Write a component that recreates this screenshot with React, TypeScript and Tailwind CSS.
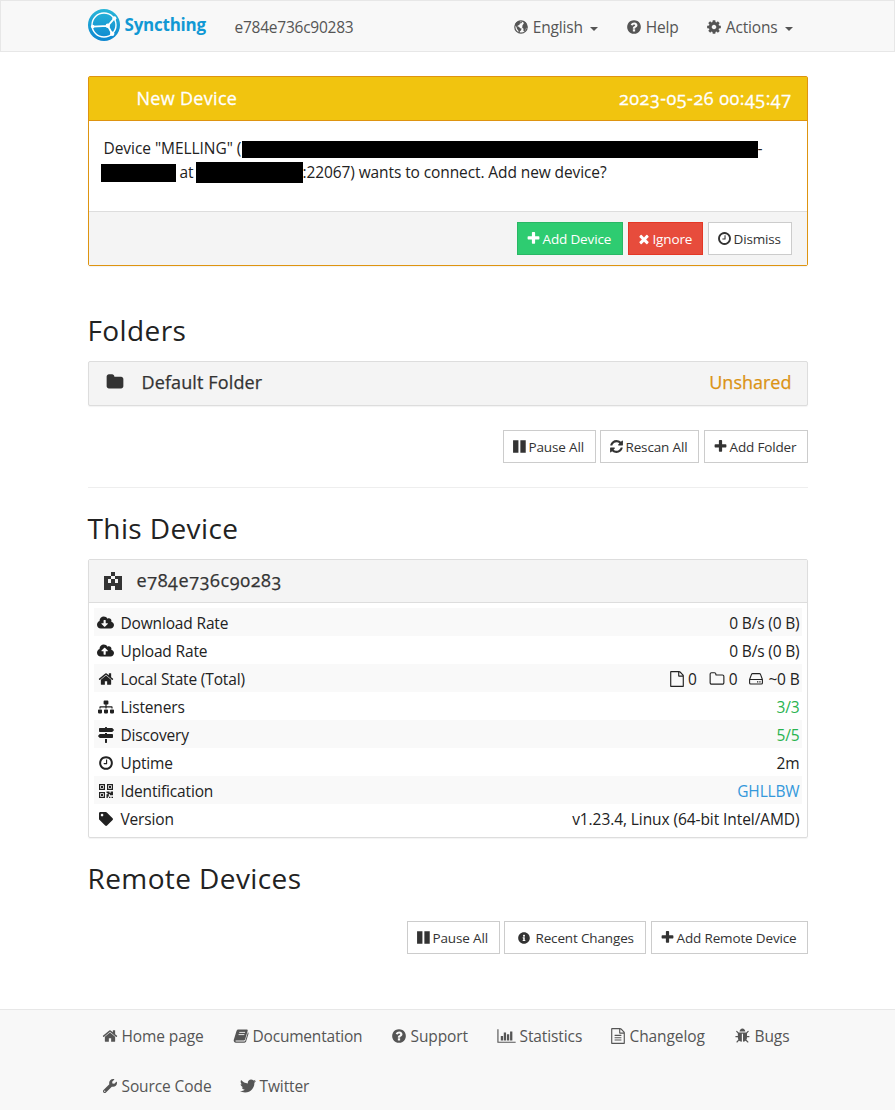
import type { ReactNode } from "react";
import { FaCloudDownloadAlt, FaCloudUploadAlt, FaInfoCircle, FaMapSigns, FaSitemap, FaTag, FaTwitter, FaWrench } from "react-icons/fa";

const paths = {
  home: "M1472 992v480q0 26-19 45t-45 19h-384v-384h-256v384h-384q-26 0-45-19t-19-45v-480q0-1 .5-3t.5-3l575-474 575 474q1 2 1 6zm223-69l-62 74q-8 9-21 11h-3q-13 0-21-7l-692-577-692 577q-12 8-24 7-13-2-21-11l-62-74q-8-10-7-23.5t11-21.5l719-599q32-26 76-26t76 26l244 204v-195q0-14 9-23t23-9h192q14 0 23 9t9 23v408l219 182q10 8 11 21.5t-7 23.5z",
  plus: "M1600 736v192q0 40-28 68t-68 28h-416v416q0 40-28 68t-68 28h-192q-40 0-68-28t-28-68v-416h-416q-40 0-68-28t-28-68v-192q0-40 28-68t68-28h416v-416q0-40 28-68t68-28h192q40 0 68 28t28 68v416h416q40 0 68 28t28 68z",
  times: "M1490 1322q0 40-28 68l-136 136q-28 28-68 28t-68-28l-294-294-294 294q-28 28-68 28t-68-28l-136-136q-28-28-28-68t28-68l294-294-294-294q-28-28-28-68t28-68l136-136q28-28 68-28t68 28l294 294 294-294q28-28 68-28t68 28l136 136q28 28 28 68t-28 68l-294 294 294 294q28 28 28 68z",
  clock: "M1024 544v448q0 14-9 23t-23 9h-320q-14 0-23-9t-9-23v-64q0-14 9-23t23-9h224v-352q0-14 9-23t23-9h64q14 0 23 9t9 23zm416 352q0-148-73-273t-198-198-273-73-273 73-198 198-73 273 73 273 198 198 273 73 273-73 198-198 73-273zm224 0q0 209-103 385.5t-279.5 279.5-385.5 103-385.5-103-279.5-279.5-103-385.5 103-385.5 279.5-279.5 385.5-103 385.5 103 279.5 279.5 103 385.5z",
  question: "M1024 1376v-192q0-14-9-23t-23-9h-192q-14 0-23 9t-9 23v192q0 14 9 23t23 9h192q14 0 23-9t9-23zm256-672q0-88-55.5-163t-138.5-116-170-41q-243 0-371 213-15 24 8 42l132 100q7 6 19 6 16 0 25-12 53-68 86-92 34-24 86-24 48 0 85.5 26t37.5 59q0 38-20 61t-68 45q-63 28-115.5 86.5t-52.5 125.5v36q0 14 9 23t23 9h192q14 0 23-9t9-23q0-19 21.5-49.5t54.5-49.5q32-18 49-28.5t46-35 44.5-48 28-60.5 12.5-81zm384 192q0 209-103 385.5t-279.5 279.5-385.5 103-385.5-103-279.5-279.5-103-385.5 103-385.5 279.5-279.5 385.5-103 385.5 103 279.5 279.5 103 385.5z",
  cog: "M1152 896q0-106-75-181t-181-75-181 75-75 181 75 181 181 75 181-75 75-181zm512-109v222q0 12-8 23t-20 13l-185 28q-19 54-39 91 35 50 107 138 10 12 10 25t-9 23q-27 37-99 108t-94 71q-12 0-26-9l-138-108q-44 23-91 38-16 136-29 186-7 28-36 28h-222q-14 0-24.5-8.5t-11.5-21.5l-28-184q-49-16-90-37l-141 107q-10 9-25 9-14 0-25-11-126-114-165-168-7-10-7-23 0-12 8-23 15-21 51-66.5t54-70.5q-27-50-41-99l-183-27q-13-2-21-12.5t-8-23.5v-222q0-12 8-23t19-13l186-28q14-46 39-92-40-57-107-138-10-12-10-24 0-10 9-23 26-36 98.5-107.5t94.5-71.5q13 0 26 10l138 107q44-23 91-38 16-136 29-186 7-28 36-28h222q14 0 24.5 8.5t11.5 21.5l28 184q49 16 90 37l142-107q9-9 24-9 13 0 25 10 129 119 165 170 7 8 7 22 0 12-8 23-15 21-51 66.5t-54 70.5q26 50 41 98l183 28q13 2 21 12.5t8 23.5z",
  folder: "M1728 608v704q0 92-66 158t-158 66h-1216q-92 0-158-66t-66-158v-960q0-92 66-158t158-66h320q92 0 158 66t66 158v32h672q92 0 158 66t66 158z",
  folderO: "M1600 1312v-704q0-40-28-68t-68-28h-704q-40 0-68-28t-28-68v-64q0-40-28-68t-68-28h-320q-40 0-68 28t-28 68v960q0 40 28 68t68 28h1216q40 0 68-28t28-68zm128-704v704q0 92-66 158t-158 66h-1216q-92 0-158-66t-66-158v-960q0-92 66-158t158-66h320q92 0 158 66t66 158v32h672q92 0 158 66t66 158z",
  refresh: "M1639 1056q0 5-1 7-64 268-268 434.5t-478 166.5q-146 0-282.5-55t-243.5-157l-129 129q-19 19-45 19t-45-19-19-45v-448q0-26 19-45t45-19h448q26 0 45 19t19 45-19 45l-137 137q71 66 161 102t187 36q134 0 250-65t186-179q11-17 53-117 8-23 30-23h192q13 0 22.5 9.5t9.5 22.5zm25-800v448q0 26-19 45t-45 19h-448q-26 0-45-19t-19-45 19-45l138-138q-148-137-349-137-134 0-250 65t-186 179q-11 17-53 117-8 23-30 23h-199q-13 0-22.5-9.5t-9.5-22.5v-7q65-268 270-434.5t480-166.5q146 0 284 55.5t245 156.5l130-129q19-19 45-19t45 19 19 45z",
  pause: "M128 160h640v1472h-640zM1000 160h640v1472h-640z",
  fileO: "M1596 380q28 28 48 76t20 88v1152q0 40-28 68t-68 28h-1344q-40 0-68-28t-28-68v-1600q0-40 28-68t68-28h896q40 0 88 20t76 48zm-444-244v376h376q-10-29-22-41l-313-313q-12-12-41-22zm384 1528v-1024h-416q-40 0-68-28t-28-68v-416h-768v1536h1280z",
  fileText: "M1596 380q28 28 48 76t20 88v1152q0 40-28 68t-68 28h-1344q-40 0-68-28t-28-68v-1600q0-40 28-68t68-28h896q40 0 88 20t76 48zm-444-244v376h376q-10-29-22-41l-313-313q-12-12-41-22zm384 1528v-1024h-416q-40 0-68-28t-28-68v-416h-768v1536h1280zm-1024-864q0-14 9-23t23-9h704q14 0 23 9t9 23v64q0 14-9 23t-23 9h-704q-14 0-23-9t-9-23v-64zm736 224q14 0 23 9t9 23v64q0 14-9 23t-23 9h-704q-14 0-23-9t-9-23v-64q0-14 9-23t23-9h704zm0 256q14 0 23 9t9 23v64q0 14-9 23t-23 9h-704q-14 0-23-9t-9-23v-64q0-14 9-23t23-9h704z",
  bug: "M1632 960q0 26-19 45t-45 19h-224q0 171-67 290l208 209q19 19 19 45t-19 45q-18 19-45 19t-45-19l-198-197q-5 5-15 13t-42 28.5-65 36.5-82 29-97 13v-896h-128v896q-51 0-101.5-13.5t-87-33-66-39-43.5-32.5l-15-14-183 207q-20 21-48 21-24 0-43-16-19-18-20.5-44.5t15.5-46.5l202-227q-58-114-58-274h-224q-26 0-45-19t-19-45 19-45 45-19h224v-294l-173-173q-19-19-19-45t19-45 45-19 45 19l173 173h844l173-173q19-19 45-19t45 19 19 45-19 45l-173 173v294h224q26 0 45 19t19 45zm-480-576h-640q0-133 93.5-226.5t226.5-93.5 226.5 93.5 93.5 226.5z",
};

function Glyph({ name, className }: { name: keyof typeof paths; className: string }) {
  return <svg viewBox="0 0 1792 1792" fill="currentColor" className={`shrink-0 ${className}`}><path d={paths[name]} /></svg>;
}

function Globe() {
  return (
    <svg viewBox="0 0 16 16" className="size-4 shrink-0">
      <circle cx="8" cy="8" r="6.2" fill="none" stroke="currentColor" strokeWidth="1.2" />
      <path fill="currentColor" d="M1.8 6.4C2.3 4 4.300 2 7 1.700L6.500 3l1.300.2.5-.7 1 .6-1.100 1.200-1.300.3-.6 1.400-1.500.4-.3 1.200 1.500.2 1.100 1.400 1.500.4-.5 1.600-1.300 1.300-.1 1.700-1-.4-.5-2.600L4 10.100 3.600 8.300 2.800 7.100zM9.500 6.300l1.300-1.700-.5-1.200 1-1 1.700 1.600 1.100 2.400.1 2.500-1.100-.1-.5 1.900-1.100 1.700-1.100-.7.1-2-1.300-.9z" />
    </svg>
  );
}

function Book() {
  return (
    <svg viewBox="0 0 16 16" className="size-4 shrink-0">
      <path fill="currentColor" d="M5.300 1.400h8.400c.8 0 1.200.6 1 1.300l-2.600 8.800c-.2.7-.7 1-1.400 1H2.900c-.6 0-.8.9.2.9h8.100c.6 0 1-.2 1.200-.8l2.500-8.300c.6.3.8.8.6 1.400l-2.400 7.900c-.2.700-.9 1.100-1.600 1.100H3c-1.700 0-2.700-1.500-2.200-2.900l2.700-8.800c.3-1 .9-1.600 1.800-1.600z" />
      <path stroke="#f8f8f8" strokeWidth=".9" d="M6.300 4.400h5.800M5.600 6.600h5.800" />
    </svg>
  );
}

function BarChart() {
  return (
    <svg viewBox="0 0 2048 1792" fill="currentColor" className="h-4 w-[19px] shrink-0">
      <path d="M2048 1536v128h-2048v-1536h128v1408zM384 896h256v512h-256zM720 512h256v896h-256zM1072 704h256v704h-256zM1424 384h256v1024h-256z" />
    </svg>
  );
}

function Hdd() {
  return (
    <svg viewBox="0 0 14 14" fill="none" stroke="currentColor" className="mr-[5px] ml-3 size-[14px] shrink-0">
      <path strokeWidth="1.100" strokeLinejoin="round" d="M.6 7.500L2.500 2.400q.3-.8 1.100-.8h6.800q.8 0 1.100.8L13.400 7.500V11q0 1-1 1H1.600q-1 0-1-1zM.6 7.500h12.800" />
      <path strokeWidth="1.300" d="M8 9.800h1.300M10.300 9.800h1.300" />
    </svg>
  );
}

function QrCode() {
  return (
    <svg viewBox="0 0 14 14" className="size-[14px] shrink-0">
      <path fill="none" stroke="currentColor" strokeWidth="1.200" d="M.6.6h4.800v4.800H.6zM8.600.6h4.800v4.800H8.600zM.6 8.600h4.800v4.800H.6z" />
      <path fill="currentColor" d="M2 2h2v2H2zM10 2h2v2h-2zM2 10h2v2H2zM7.500 7.500h3v1.200h1.200V7.500H14v3.800h-3.200v-1.300h-1v2.400h-1V14H7.500v-3.800h1.100V9H7.500zM10 12.800h1.400V14H10zM12.500 12.800H14V14h-1.500z" />
    </svg>
  );
}

function Logo() {
  return (
    <svg viewBox="0 0 32 32" className="size-8 shrink-0">
      <defs>
        <linearGradient id="logo" x1="0" y1="0" x2="0" y2="1">
          <stop offset="0" stopColor="#29b6d8" />
          <stop offset="1" stopColor="#0c86d0" />
        </linearGradient>
      </defs>
      <circle cx="16" cy="16" r="16" fill="url(#logo)" />
      <g fill="none" stroke="#fff" strokeWidth="1.400">
        <circle cx="16" cy="16" r="12" />
        <path strokeWidth="1.800" d="M19.800 16.800L26.300 9.300M19.800 16.800L4.600 17.600M19.800 16.800L24.300 25" />
      </g>
      <g fill="#fff">
        <circle cx="26.400" cy="9.300" r="2" />
        <circle cx="4.700" cy="17.600" r="1.800" />
        <circle cx="19.800" cy="16.800" r="2.200" />
        <circle cx="24.200" cy="24.800" r="2.200" />
      </g>
    </svg>
  );
}

function Identicon() {
  return (
    <svg viewBox="0 0 5 5" fill="#333" shapeRendering="crispEdges" className="size-[18px] shrink-0">
      <path d="M2 0h1v1h-1zM0 1h2v1h-2zM3 1h2v1h-2zM0 2h1v1h-1zM2 2h1v1h-1zM4 2h1v1h-1zM0 3h5v1h-5zM0 4h2v1h-2zM3 4h2v1h-2z" />
    </svg>
  );
}

function Caret() {
  return <span className="ml-[3px] mt-[3px] border-x-4 border-t-4 border-x-transparent border-t-[#555]" />;
}

function Button({ width, tone = "border-[#ccc] bg-white text-[#333]", icon, children, gap = "gap-[2px]" }: { width: string; tone?: string; icon: ReactNode; children: ReactNode; gap?: string }) {
  return (
    <button className={`flex h-[33px] items-center border pl-2 text-[13.5px] tracking-[-0.15px] whitespace-nowrap ${gap} ${width} ${tone}`}>
      {icon}
      <span>{children}</span>
    </button>
  );
}

function Row({ icon, label, striped, children }: { icon: ReactNode; label: string; striped?: boolean; children: ReactNode }) {
  return (
    <div className={`flex h-7 items-center pt-px pr-[2px] pl-[3px] ${striped ? "bg-[#f9f9f9]" : ""}`}>
      <span className="flex w-[18px] justify-center">{icon}</span>
      <span className="ml-[6px]">{label}</span>
      <span className="ml-auto flex items-center">{children}</span>
    </div>
  );
}

function FooterLink({ width, icon, children, gap = "gap-1" }: { width: string; icon: ReactNode; children: ReactNode; gap?: string }) {
  return <a className={`flex h-[50px] items-center whitespace-nowrap ${gap} ${width}`}>{icon}<span>{children}</span></a>;
}

const heading = "text-[28px] leading-[30px] tracking-[0.4px] text-[#222]";

export default function App() {
  return (
    <div className="flex h-[1110px] flex-col overflow-hidden bg-white font-['Open_Sans',sans-serif] text-[15.5px] leading-6 tracking-[-0.16px] text-[#222]">
      <nav className="h-[52px] shrink-0 border border-[#e7e7e7] bg-[#f8f8f8] text-[#555]">
        <div className="mx-auto flex h-12 w-[720px] items-center">
          <div className="flex w-[147px] items-center gap-[5px]">
            <Logo />
            <span className="text-[17px] font-bold tracking-[-0.23px] text-[#1198d4]">Syncthing</span>
          </div>
          <span className="mt-1 tracking-[-0.24px]">e784e736c90283</span>
          <div className="mt-1 ml-auto flex pr-[15px]">
            <a className="flex w-[113px] items-center gap-1"><Globe />English<Caret /></a>
            <a className="flex w-[80px] items-center gap-1"><Glyph name="question" className="size-4" />Help</a>
            <a className="flex items-center gap-1"><Glyph name="cog" className="size-4" />Actions<Caret /></a>
          </div>
        </div>
      </nav>

      <main className="mx-auto w-[720px] grow pt-6">
        <section className="h-[190px] rounded-[2px] border border-[#de9410] shadow-[0_1px_1px_rgba(0,0,0,0.05)]">
          <header className="flex h-11 items-center justify-between border-b border-[#de9410] bg-[#f1c40f] pr-[15px] pb-[2px] pl-12 text-lg font-medium tracking-[0.3px] text-white [-webkit-text-stroke:0.3px]">
            <span>New Device</span>
            <span className="tracking-[0.5px] oldstyle-nums">2023-05-26 00:45:47</span>
          </header>
          <div className="h-[90px] pt-[15px] whitespace-nowrap">
            <div className="flex h-6 items-center pl-[15px]">
              <span className="w-[138px] tracking-[-0.05px]">Device "MELLING" (</span>
              <span className="mt-[2px] h-[17px] w-[516px] bg-black" />
              <span>-</span>
            </div>
            <div className="flex h-6 items-center pl-3">
              <span className="mt-[2px] h-[18px] w-[75px] bg-black" />
              <span className="w-5 pl-1">at</span>
              <span className="mt-px h-[21px] w-[107px] bg-black" />
              <span className="tracking-[-0.1px]">:22067) wants to connect. Add new device?</span>
            </div>
          </div>
          <footer className="flex h-[54px] justify-end gap-[5px] border-t border-[#ddd] bg-[#f4f4f4] pt-[10px] pr-[15px]">
            <Button width="w-[106px]" tone="border-[#29b765] bg-[#2ecc71] text-white" icon={<Glyph name="plus" className="size-[15px]" />}>Add Device</Button>
            <Button width="w-[75px]" tone="border-[#e43725] bg-[#e74c3c] text-white" icon={<Glyph name="times" className="size-[14px]" />}>Ignore</Button>
            <Button width="w-[84px]" icon={<Glyph name="clock" className="size-[15px]" />}>Dismiss</Button>
          </footer>
        </section>

        <h2 className={`mt-[49px] ${heading}`}>Folders</h2>
        <section className="mt-4 flex h-[45px] items-center rounded-[2px] border border-[#ddd] bg-[#f4f4f4] pr-[15px] pb-[3px] pl-[17px] text-lg font-medium tracking-[0.12px] text-[#333] shadow-[0_1px_1px_rgba(0,0,0,0.05)] [-webkit-text-stroke:0.25px]">
          <Glyph name="folder" className="size-[18px]" />
          <span className="ml-[18px]">Default Folder</span>
          <span className="ml-auto tracking-[0px] text-[#db9314]">Unshared</span>
        </section>
        <div className="mt-6 flex justify-end">
          <Button width="w-[93px]" icon={<Glyph name="pause" className="size-[15px]" />}>Pause All</Button>
          <span className="w-1" />
          <Button width="w-[99px]" icon={<Glyph name="refresh" className="size-[15px]" />}>Rescan All</Button>
          <span className="w-[5px]" />
          <Button width="w-[104px]" icon={<Glyph name="plus" className="size-[15px]" />}>Add Folder</Button>
        </div>
        <hr className="mt-6 border-[#eee]" />

        <h2 className={`mt-[25px] ${heading}`}>This Device</h2>
        <section className="mt-4 h-[279px] rounded-[2px] border border-[#ddd] shadow-[0_1px_1px_rgba(0,0,0,0.05)]">
          <header className="flex h-[43px] items-center gap-[15px] border-b border-[#ddd] bg-[#f4f4f4] pl-[15px] text-lg font-medium text-[#333] [-webkit-text-stroke:0.25px]">
            <Identicon />
            <span className="-mt-[2px] tracking-[0.62px] oldstyle-nums">e784e736c90283</span>
          </header>
          <div className="p-[5px]">
            <Row striped label="Download Rate" icon={<FaCloudDownloadAlt className="size-[17px]" />}>0 B/s (0 B)</Row>
            <Row label="Upload Rate" icon={<FaCloudUploadAlt className="size-[17px]" />}>0 B/s (0 B)</Row>
            <Row striped label="Local State (Total)" icon={<Glyph name="home" className="size-4" />}>
              <Glyph name="fileO" className="mr-[3px] size-4" />0
              <Glyph name="folderO" className="mr-1 ml-3 size-4" />0
              <Hdd />~0 B
            </Row>
            <Row label="Listeners" icon={<FaSitemap className="size-4" />}><span className="text-[#29b34f]">3/3</span></Row>
            <Row striped label="Discovery" icon={<FaMapSigns className="size-4" />}><span className="text-[#29b34f]">5/5</span></Row>
            <Row label="Uptime" icon={<Glyph name="clock" className="size-4" />}>2m</Row>
            <Row striped label="Identification" icon={<QrCode />}><span className="text-[#3498db]">GHLLBW</span></Row>
            <Row label="Version" icon={<FaTag className="size-[14px]" />}><span className="tracking-[-0.08px]">v1.23.4, Linux (64-bit Intel/AMD)</span></Row>
          </div>
        </section>

        <h2 className={`mt-[25px] ${heading}`}>Remote Devices</h2>
        <div className="mt-7 flex justify-end">
          <Button width="w-[93px]" icon={<Glyph name="pause" className="size-[15px]" />}>Pause All</Button>
          <span className="w-1" />
          <Button width="w-[142px]" gap="gap-[6px]" icon={<FaInfoCircle className="ml-[5px] size-3" />}>Recent Changes</Button>
          <span className="w-[5px]" />
          <Button width="w-[157px]" icon={<Glyph name="plus" className="size-[15px]" />}>Add Remote Device</Button>
        </div>
      </main>

      <footer className="h-[101px] shrink-0 border-t border-[#e7e7e7] bg-[#f8f8f8] pt-px text-[#555]">
        <div className="mx-auto w-[720px] pl-[14px] tracking-[-0.1px]">
          <div className="flex">
            <FooterLink width="w-[131px]" icon={<Glyph name="home" className="size-4" />}>Home page</FooterLink>
            <FooterLink width="w-[158px]" icon={<Book />}><span className="tracking-[-0.2px]">Documentation</span></FooterLink>
            <FooterLink width="w-[106px]" icon={<Glyph name="question" className="size-4" />}>Support</FooterLink>
            <FooterLink width="w-[113px]" icon={<BarChart />}>Statistics</FooterLink>
            <FooterLink width="w-[125px]" icon={<Glyph name="fileText" className="size-4" />}>Changelog</FooterLink>
            <FooterLink width="w-[60px]" icon={<Glyph name="bug" className="size-4" />}>Bugs</FooterLink>
          </div>
          <div className="flex">
            <FooterLink width="w-[138px]" icon={<FaWrench className="size-4 p-px" />}>Source Code</FooterLink>
            <FooterLink width="w-[70px]" icon={<FaTwitter className="size-4" />}>Twitter</FooterLink>
          </div>
        </div>
      </footer>
    </div>
  );
}
